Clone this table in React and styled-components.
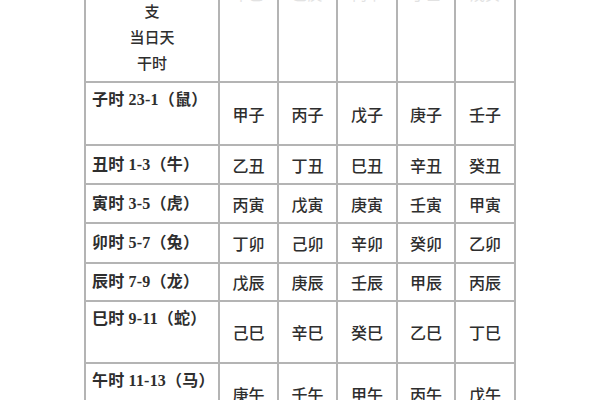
import React from 'react';
import styled, { createGlobalStyle } from 'styled-components';

const GlobalStyle = createGlobalStyle`
  html, body {
    margin: 0;
    padding: 0;
    background: #ffffff;
    overflow: hidden;
  }
`

const Page = styled.div`
  width: 600px;
  height: 400px;
  overflow: hidden;
  background: #ffffff;
`

const Table = styled.table`
  margin: -40px 0 0 84px;
  border-collapse: collapse;
  table-layout: fixed;
  width: 432px;
  color: #2e2e2e;
  font-family: "Noto Sans CJK SC", sans-serif;
  td {
    border: 2px solid #b4b4b4;
    padding: 0;
  }
`

const Col = styled.col`
  width: ${props => props.$w}px;
`

const HeadRow = styled.tr`
  height: 121px;
`

const Row = styled.tr`
  height: ${props => props.$h}px;
`

const CornerCell = styled.td`
  vertical-align: top;
  text-align: center;
  padding-top: 10px !important;
  font-size: 15px;
  line-height: 26px;
  font-weight: 500;
`

const HeadCell = styled.td`
  vertical-align: top;
  text-align: center;
  padding-top: 19px !important;
  font-size: 15px;
  line-height: 26px;
  color: #e2e2e2;
`

const TimeCell = styled.td`
  vertical-align: ${props => props.$top ? 'top' : 'middle'};
  padding: ${props => props.$top ? '7px' : '0'} 0 0 6px !important;
  font-family: "Liberation Serif", "Noto Sans CJK SC", serif;
  font-weight: 700;
  font-size: 16px;
  line-height: 20px;
  white-space: nowrap;
  letter-spacing: 0.2px;
`

const Cell = styled.td`
  text-align: center;
  vertical-align: middle;
  font-size: 16px;
  font-weight: 500;
  line-height: 20px;
`

const widths = [134, 59, 59, 60, 58, 60]

const heads = ['甲己', '乙庚', '丙辛', '丁壬', '戊癸']

const rows = [
  { time: '子时 23-1（鼠）', h: 63, top: true, cells: ['甲子', '丙子', '戊子', '庚子', '壬子'] },
  { time: '丑时 1-3（牛）', h: 39, cells: ['乙丑', '丁丑', '巳丑', '辛丑', '癸丑'] },
  { time: '寅时 3-5（虎）', h: 39, cells: ['丙寅', '戊寅', '庚寅', '壬寅', '甲寅'] },
  { time: '卯时 5-7（兔）', h: 40, cells: ['丁卯', '己卯', '辛卯', '癸卯', '乙卯'] },
  { time: '辰时 7-9（龙）', h: 38, cells: ['戊辰', '庚辰', '壬辰', '甲辰', '丙辰'] },
  { time: '巳时 9-11（蛇）', h: 62, top: true, cells: ['己巳', '辛巳', '癸巳', '乙巳', '丁巳'] },
  { time: '午时 11-13（马）', h: 62, top: true, cells: ['庚午', '壬午', '甲午', '丙午', '戊午'] },
]

const App = () => {
  return (<Page>
    <GlobalStyle />
    <Table>
      <colgroup>
        {widths.map((w, i) => <Col key={i} $w={w} />)}
      </colgroup>
      <tbody>
        <HeadRow>
          <CornerCell>
            <div>时辰地</div>
            <div>支</div>
            <div>当日天</div>
            <div>干时</div>
          </CornerCell>
          {heads.map(h => <HeadCell key={h}>{h}</HeadCell>)}
        </HeadRow>
        {rows.map(r => (
          <Row key={r.time} $h={r.h}>
            <TimeCell $top={r.top}>{r.time}</TimeCell>
            {r.cells.map((c, i) => <Cell key={i}>{c}</Cell>)}
          </Row>
        ))}
      </tbody>
    </Table>
  </Page>);
}

export default App;
